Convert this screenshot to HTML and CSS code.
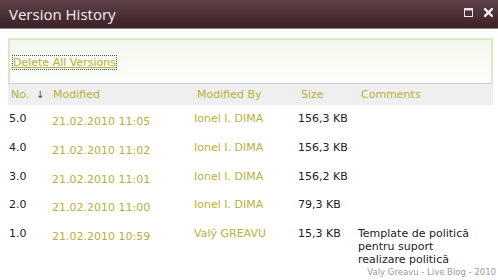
FILE: index.html
```html
<!DOCTYPE html>
<html lang="ro">
<head>
  <meta charset="UTF-8" />
  <title>Version History</title>
  <link rel="stylesheet" href="styles.css">
</head>
<body>
  <div class="titlebar">
    <span class="title">Version History</span>
    <span class="actions">
      <svg width="9" height="9" viewBox="0 0 9 9"><rect x="0.5" y="0.5" width="8" height="8" fill="none" stroke="#e9e4e6" stroke-width="1"/><rect x="0" y="0" width="9" height="2.5" fill="#e9e4e6"/></svg>
      <svg width="9" height="9" viewBox="0 0 9 9"><path d="M1 1 L8 8 M8 1 L1 8" stroke="#f2eeef" stroke-width="2.4" stroke-linecap="square"/></svg>
    </span>
  </div>

  <div class="content">
    <div class="panel">
      <a href="#" class="delete">Delete All Versions</a>
    </div>

    <table class="versions">
      <thead>
        <tr>
          <th class="c-no">No. <span class="arrow">&#8595;</span></th>
          <th class="c-mod">Modified</th>
          <th class="c-by">Modified By</th>
          <th class="c-size">Size</th>
          <th class="c-com">Comments</th>
        </tr>
      </thead>
      <tbody>
        <tr>
          <td>5.0</td>
          <td class="date">21.02.2010 11:05</td>
          <td class="link">Ionel I. DIMA</td>
          <td>156,3 KB</td>
          <td></td>
        </tr>
        <tr>
          <td>4.0</td>
          <td class="date">21.02.2010 11:02</td>
          <td class="link">Ionel I. DIMA</td>
          <td>156,3 KB</td>
          <td></td>
        </tr>
        <tr>
          <td>3.0</td>
          <td class="date">21.02.2010 11:01</td>
          <td class="link">Ionel I. DIMA</td>
          <td>156,2 KB</td>
          <td></td>
        </tr>
        <tr>
          <td>2.0</td>
          <td class="date">21.02.2010 11:00</td>
          <td class="link">Ionel I. DIMA</td>
          <td>79,3 KB</td>
          <td></td>
        </tr>
        <tr>
          <td>1.0</td>
          <td class="date">21.02.2010 10:59</td>
          <td class="link">Valÿ GREAVU</td>
          <td>15,3 KB</td>
          <td class="comment">Template de politică<br>pentru suport<br>realizare politică</td>
        </tr>
      </tbody>
    </table>
  </div>

  <div class="credit">Valy Greavu - Live Blog - 2010</div>
</body>
</html>
```

FILE: styles.css
```css
html, body {
  margin: 0;
  padding: 0;
  background: #fff;
  width: 498px;
  height: 280px;
  overflow: hidden;
}
body {
  position: relative;
  font-family: 'DejaVu Sans', Verdana, sans-serif;
  font-size: 11px;
  color: #222;
}
.titlebar {
  height: 28px;
  background: linear-gradient(#5e4148, #3b2227);
  display: flex;
  align-items: center;
  justify-content: space-between;
  padding: 0 5px 0 9px;
  border-bottom: 1px solid #8f8487;
}
.title {
  font-family: 'Open Sans', sans-serif;
  font-size: 15px;
  color: #f3eff0;
  margin-top: -1px;
}
.actions {
  display: flex;
  gap: 11px;
  margin-top: -4px;
}
.content {
  padding: 9px 5px 0 8px;
}
.panel {
  height: 46px;
  border: 1px solid #dbe8c6;
  border-width: 2px 2px 1px 2px;
  border-bottom-color: #c6cbe2;
  background: linear-gradient(#f3f8ec, #fdfefc);
  padding-left: 3px;
  box-sizing: border-box;
  padding-top: 16px;
}
.delete {
  color: #b6b13a;
  text-decoration: underline;
  outline: 1px dotted #555;
  line-height: 13px;
  display: inline-block;
}
.versions {
  width: 485px;
  border-collapse: collapse;
  table-layout: fixed;
}
.versions th {
  background: #efefef;
  font-weight: normal;
  color: #b6b13a;
  text-align: left;
  height: 21px;
  padding: 0 0 0 3px;
  line-height: 14px;
}
.versions th.c-no { width: 41px; padding-left: 3px; }
.versions th.c-mod { width: 141px; padding-left: 1px; }
.versions th.c-by { width: 101px; }
.versions th.c-size { width: 57px; }
.arrow {
  color: #444;
  font-size: 10px;
  margin-left: 3px;
}
.versions td {
  vertical-align: top;
  padding: 7px 0 7.75px 0;
  line-height: 14px;
  color: #222;
}
.versions td.date {
  color: #b6b13a;
  padding-top: 10px;
  padding-bottom: 4.75px;
}
.versions td.link {
  color: #b6b13a;
}
.versions td.comment {
  line-height: 13px;
  padding-bottom: 0;
}
.versions tbody td:first-child {
  padding-left: 1px;
}
.credit {
  position: absolute;
  right: 2px;
  bottom: 3px;
  font-size: 8.5px;
  color: #9a9a9a;
}
```
